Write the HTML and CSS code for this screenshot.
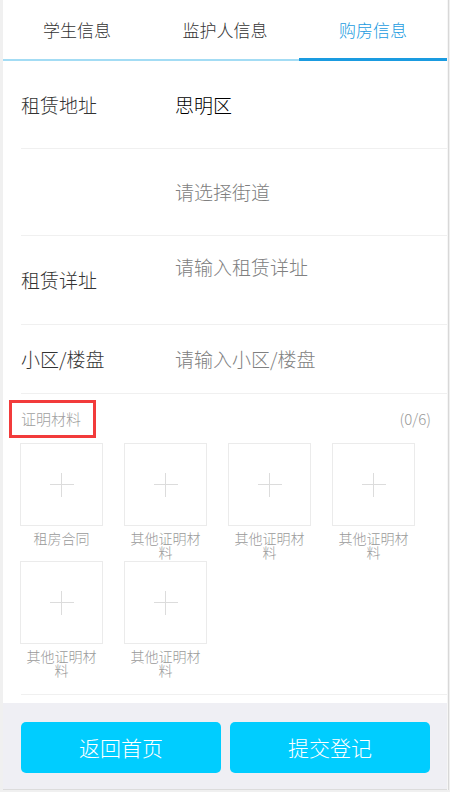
FILE: index.html
```html
<!DOCTYPE html>
<html lang="zh-CN">
<head>
    <meta charset="UTF-8">
    <meta name="viewport" content="width=device-width, initial-scale=1.0">
    <title>购房信息</title>
    <link rel="stylesheet" href="styles.css">
</head>
<body>
    <div class="page">
        <div class="tabs">
            <div class="tab">学生信息</div>
            <div class="tab">监护人信息</div>
            <div class="tab active">购房信息</div>
        </div>

        <div class="form">
            <div class="form-row row-tall">
                <div class="label">租赁地址</div>
                <div class="value">思明区</div>
            </div>
            <div class="form-row row-street">
                <div class="label"></div>
                <div class="value placeholder">请选择街道</div>
            </div>
            <div class="form-row row-area">
                <div class="label">租赁详址</div>
                <div class="value placeholder top">请输入租赁详址</div>
            </div>
            <div class="form-row row-short">
                <div class="label">小区/楼盘</div>
                <div class="value placeholder">请输入小区/楼盘</div>
            </div>

            <div class="upload">
                <div class="upload-head">
                    <span class="upload-title">证明材料</span>
                    <span class="upload-count">(0/6)</span>
                </div>
                <div class="upload-grid">
                    <div class="upload-item">
                        <div class="upload-box"></div>
                        <div class="upload-name">租房合同</div>
                    </div>
                    <div class="upload-item">
                        <div class="upload-box"></div>
                        <div class="upload-name">其他证明材料</div>
                    </div>
                    <div class="upload-item">
                        <div class="upload-box"></div>
                        <div class="upload-name">其他证明材料</div>
                    </div>
                    <div class="upload-item">
                        <div class="upload-box"></div>
                        <div class="upload-name">其他证明材料</div>
                    </div>
                    <div class="upload-item">
                        <div class="upload-box"></div>
                        <div class="upload-name">其他证明材料</div>
                    </div>
                    <div class="upload-item">
                        <div class="upload-box"></div>
                        <div class="upload-name">其他证明材料</div>
                    </div>
                </div>
            </div>
        </div>

        <div class="footer">
            <button class="btn">返回首页</button>
            <button class="btn">提交登记</button>
        </div>
    </div>
</body>
</html>
```

FILE: styles.css
```css
html, body {
    margin: 0;
    padding: 0;
}
body {
    background-color: #f0f0f0;
    font-family: "Noto Sans CJK SC", "Microsoft YaHei", sans-serif;
    font-weight: 300;
    color: #333;
}
.page {
    margin-left: 3px;
    width: 444px;
    height: 790px;
    background-color: #fff;
    display: flex;
    flex-direction: column;
    box-shadow: 1px 0 0 #f6f6f6, 2px 0 0 #d8d8d8;
}
.tabs {
    display: flex;
    height: 59px;
    border-bottom: 2px solid #a3dcf4;
}
.tab {
    flex: 1;
    position: relative;
    text-align: center;
    font-size: 17px;
    line-height: 59px;
    color: #333;
}
.tab.active {
    color: #1a9be0;
}
.tab.active::after {
    content: "";
    position: absolute;
    left: 0;
    right: 0;
    bottom: -2px;
    height: 3px;
    background-color: #1a9be0;
}
.form {
    flex: 1;
}
.form-row {
    display: flex;
    align-items: center;
    margin-left: 18px;
    border-bottom: 1px solid #f0f0f0;
    font-size: 19px;
    line-height: 24px;
}
.row-tall {
    height: 87px;
}
.row-street {
    height: 86px;
}
.row-area {
    height: 88px;
}
.row-short {
    height: 68px;
}
.label {
    width: 154px;
    color: #333;
}
.value {
    color: #000;
}
.placeholder {
    color: #808080;
}
.value.top {
    align-self: flex-start;
    padding-top: 19px;
}
.upload {
    margin-left: 18px;
    border-bottom: 1px solid #f0f0f0;
    padding-top: 15px;
    padding-bottom: 17px;
}
.upload-head {
    display: flex;
    justify-content: space-between;
    align-items: center;
    height: 20px;
    margin-bottom: 14px;
    padding-right: 16px;
    font-size: 15px;
    line-height: 20px;
}
.upload-title {
    position: relative;
    color: #a0a0a0;
}
/* annotation frame */
.upload-title::after {
    content: "";
    position: absolute;
    left: -12px;
    right: -15px;
    top: -9px;
    bottom: -9px;
    border: 3px solid #f23b3b;
}
.upload-count {
    color: #999;
}
.upload-grid {
    display: grid;
    grid-template-columns: repeat(4, 83px);
    column-gap: 21px;
    row-gap: 2px;
    margin-left: -1px;
}
.upload-box {
    position: relative;
    width: 81px;
    height: 81px;
    border: 1px solid #ebebeb;
}
.upload-box::before,
.upload-box::after {
    content: "";
    position: absolute;
    background-color: #dcdcdc;
}
.upload-box::before {
    left: 29px;
    top: 40px;
    width: 24px;
    height: 1px;
}
.upload-box::after {
    left: 40px;
    top: 29px;
    width: 1px;
    height: 24px;
}
.upload-name {
    margin-top: 5px;
    font-size: 14px;
    line-height: 14px;
    color: #9a9a9a;
    text-align: center;
    height: 28px;
}
.footer {
    margin-top: 8px;
    height: 88px;
    background-color: #efeff4;
    border-bottom: 1px solid #dcdcdc;
    display: flex;
    gap: 9px;
    padding: 19px 17px 0 18px;
    box-sizing: border-box;
}
.btn {
    flex: 1;
    height: 51px;
    border: none;
    border-radius: 5px;
    background-color: #00cdff;
    color: #fff;
    font-family: inherit;
    font-weight: 300;
    font-size: 21px;
    line-height: 51px;
    padding: 0;
}
```
